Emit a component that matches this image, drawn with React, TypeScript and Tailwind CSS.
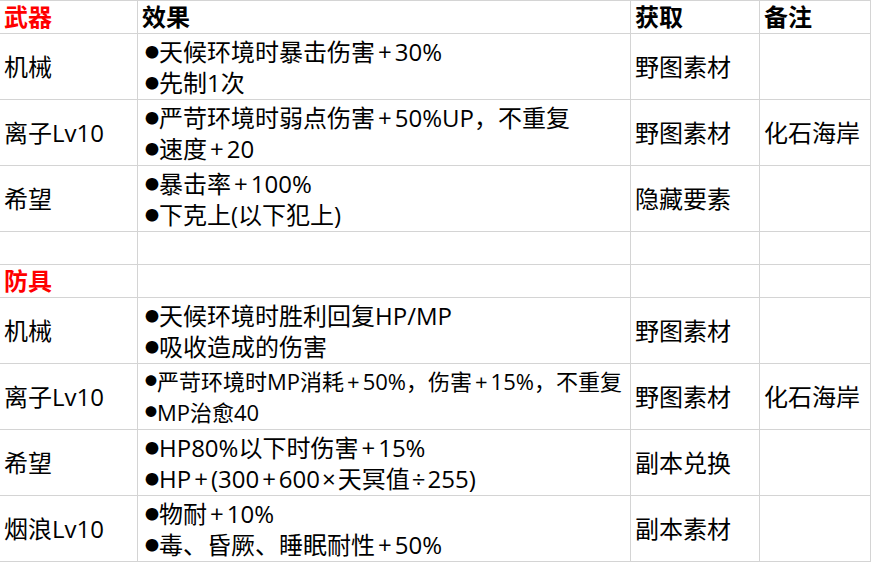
import React from "react";

type Row = {
  name: string;
  red?: boolean;
  effects: string[];
  get: string;
  note: string;
  h: "single" | "double";
  small?: boolean;
};

const rows: Row[] = [
  { name: "机械", effects: ["天候环境时暴击伤害+30%", "先制1次"], get: "野图素材", note: "", h: "double" },
  { name: "离子Lv10", effects: ["严苛环境时弱点伤害+50%UP，不重复", "速度+20"], get: "野图素材", note: "化石海岸", h: "double" },
  { name: "希望", effects: ["暴击率+100%", "下克上(以下犯上)"], get: "隐藏要素", note: "", h: "double" },
  { name: "", effects: [], get: "", note: "", h: "single" },
  { name: "防具", red: true, effects: [], get: "", note: "", h: "single" },
  { name: "机械", effects: ["天候环境时胜利回复HP/MP", "吸收造成的伤害"], get: "野图素材", note: "", h: "double" },
  { name: "离子Lv10", effects: ["严苛环境时MP消耗+50%，伤害+15%，不重复", "MP治愈40"], get: "野图素材", note: "化石海岸", h: "double", small: true },
  { name: "希望", effects: ["HP80%以下时伤害+15%", "HP+(300+600×天冥值÷255)"], get: "副本兑换", note: "", h: "double" },
  { name: "烟浪Lv10", effects: ["物耐+10%", "毒、昏厥、睡眠耐性+50%"], get: "副本素材", note: "", h: "double" },
];

function Cell({ children, className = "" }: { children?: React.ReactNode; className?: string }) {
  return (
    <div className={"border-r border-[#d4d4d4] flex flex-col justify-center pl-1 overflow-hidden whitespace-nowrap " + className}>
      {children}
    </div>
  );
}

function Effect({ text }: { text: string }) {
  const parts = text.split(/([+×÷])/);
  return (
    <span>
      {parts.map((p, k) =>
        p === "+" ? (
          <span key={k} className="mx-[3px]">+</span>
        ) : p === "×" || p === "÷" ? (
          <span key={k} className="mx-[2px]">{p}</span>
        ) : (
          <React.Fragment key={k}>{p}</React.Fragment>
        )
      )}
    </span>
  );
}

export default function App() {
  return (
    <div className="w-[872px] h-[562px] bg-white text-black font-['Open_Sans','Noto_Sans_CJK_SC',sans-serif] text-[24px]">
      <div className="w-[871px] border-t border-[#d4d4d4]">
        <div className="grid grid-cols-[138px_493px_129px_111px] h-[33px] border-b border-[#d4d4d4] font-bold leading-[32px]">
          <Cell className="text-[#ff0000]">武器</Cell>
          <Cell>效果</Cell>
          <Cell>获取</Cell>
          <Cell>备注</Cell>
        </div>
        {rows.map((r, i) => (
          <div
            key={i}
            className={
              "grid grid-cols-[138px_493px_129px_111px] border-b border-[#d4d4d4] " +
              (r.h === "double" ? "h-[66px]" : "h-[33px]")
            }
          >
            <Cell className={(r.red ? "text-[#ff0000] font-bold " : "") + "leading-[32px]"}>{r.name}</Cell>
            <Cell className={"leading-[31px] " + (r.small ? "text-[22px]" : "")}>
              {r.effects.map((e, j) => (
                <div key={j} className="flex items-center">
                  <span className={"font-['Noto_Sans_CJK_SC',sans-serif] leading-none pl-[3px] " + (r.small ? "text-[12px]" : "text-[14px]")}>●</span>
                  <Effect text={e} />
                </div>
              ))}
            </Cell>
            <Cell className="leading-[32px]">{r.get}</Cell>
            <Cell className="leading-[32px]">{r.note}</Cell>
          </div>
        ))}
      </div>
    </div>
  );
}
